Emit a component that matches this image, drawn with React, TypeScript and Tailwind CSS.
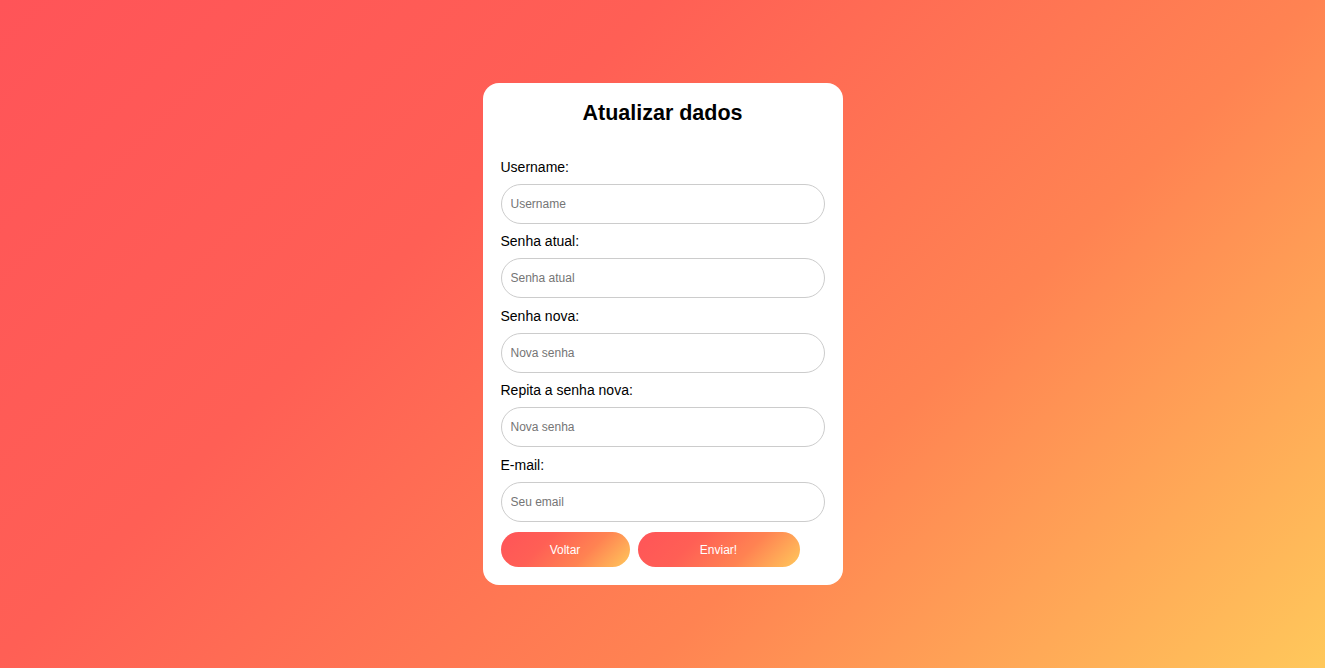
const fields = [
  { label: "Username:", placeholder: "Username", type: "text" },
  { label: "Senha atual:", placeholder: "Senha atual", type: "password" },
  { label: "Senha nova:", placeholder: "Nova senha", type: "password" },
  { label: "Repita a senha nova:", placeholder: "Nova senha", type: "password" },
  { label: "E-mail:", placeholder: "Seu email", type: "email" },
];

export default function App() {
  return (
    <div className="min-h-screen w-full flex items-start justify-center bg-[linear-gradient(135deg,#ff5458_0%,#ff5f55_33%,#ff8352_66%,#ffc85b_100%)] font-['Liberation_Sans',Arial,sans-serif]">
      <form className="mt-[83px] w-[360px] bg-white rounded-2xl px-[18px] pt-[18px] pb-[18px]">
        <h2 className="text-center text-[21.5px] leading-6 font-bold text-black mb-[33.5px]">Atualizar dados</h2>

        {fields.map((f, i) => (
          <div key={i} className="flex flex-col">
            <label className="text-[14px] leading-4 text-black mb-[9px]">{f.label}</label>
            <input
              type={f.type}
              placeholder={f.placeholder}
              className="h-10 w-full rounded-full border border-[#cccccc] px-[9px] text-[12px] text-black placeholder:text-[#757575] outline-none mb-[9.5px]"
            />
          </div>
        ))}

        <div className="flex gap-2 mt-[1px]">
          <button type="button" className="w-[129px] h-[35px] rounded-full bg-[linear-gradient(135deg,#ff5458_0%,#ff5f55_33%,#ff8352_66%,#ffc85b_100%)] text-white text-[12px]">
            Voltar
          </button>
          <button type="button" className="w-[162px] h-[35px] rounded-full bg-[linear-gradient(135deg,#ff5458_0%,#ff5f55_33%,#ff8352_66%,#ffc85b_100%)] text-white text-[12px]">
            Enviar!
          </button>
        </div>
      </form>
    </div>
  );
}
